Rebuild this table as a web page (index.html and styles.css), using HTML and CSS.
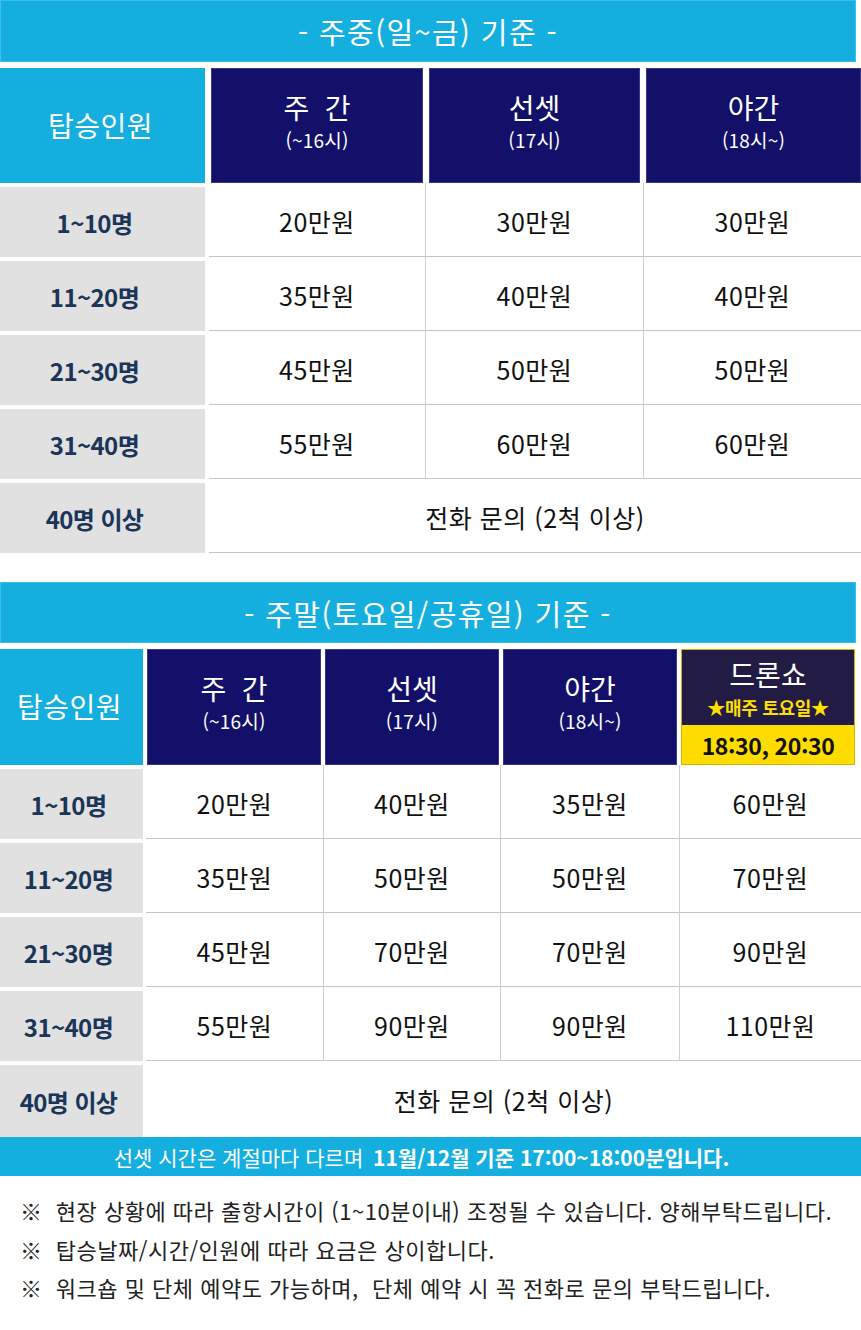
FILE: index.html
```html
<!DOCTYPE html>
<html lang="ko">
<head>
<meta charset="utf-8">
<title>요금표</title>
<link rel="stylesheet" href="styles.css">
</head>
<body>
<section class="block wk">
  <div class="banner">- 주중(일~금) 기준 -</div>
  <div class="head">
    <div class="hcell label-head">탑승인원</div>
    <div class="hcell time"><span class="t">주&nbsp;&nbsp;간</span><span class="s">(~16시)</span></div>
    <div class="hcell time"><span class="t">선셋</span><span class="s">(17시)</span></div>
    <div class="hcell time"><span class="t">야간</span><span class="s">(18시~)</span></div>
  </div>
  <div class="row"><div class="lab">1~10명</div><div class="val">20만원</div><div class="val">30만원</div><div class="val">30만원</div></div>
  <div class="row"><div class="lab">11~20명</div><div class="val">35만원</div><div class="val">40만원</div><div class="val">40만원</div></div>
  <div class="row"><div class="lab">21~30명</div><div class="val">45만원</div><div class="val">50만원</div><div class="val">50만원</div></div>
  <div class="row"><div class="lab">31~40명</div><div class="val">55만원</div><div class="val">60만원</div><div class="val">60만원</div></div>
  <div class="row"><div class="lab">40명 이상</div><div class="val span">전화 문의 (2척 이상)</div></div>
</section>

<section class="block we">
  <div class="banner">- 주말(토요일/공휴일) 기준 -</div>
  <div class="head">
    <div class="hcell label-head">탑승인원</div>
    <div class="hcell time"><span class="t">주&nbsp;&nbsp;간</span><span class="s">(~16시)</span></div>
    <div class="hcell time"><span class="t">선셋</span><span class="s">(17시)</span></div>
    <div class="hcell time"><span class="t">야간</span><span class="s">(18시~)</span></div>
    <div class="hcell drone">
      <div class="drone-top"><span class="t">드론쇼</span><span class="star">★매주 토요일★</span></div>
      <div class="drone-time">18:30, 20:30</div>
    </div>
  </div>
  <div class="row"><div class="lab">1~10명</div><div class="val">20만원</div><div class="val">40만원</div><div class="val">35만원</div><div class="val">60만원</div></div>
  <div class="row"><div class="lab">11~20명</div><div class="val">35만원</div><div class="val">50만원</div><div class="val">50만원</div><div class="val">70만원</div></div>
  <div class="row"><div class="lab">21~30명</div><div class="val">45만원</div><div class="val">70만원</div><div class="val">70만원</div><div class="val">90만원</div></div>
  <div class="row"><div class="lab">31~40명</div><div class="val">55만원</div><div class="val">90만원</div><div class="val">90만원</div><div class="val">110만원</div></div>
  <div class="row last"><div class="lab">40명 이상</div><div class="val span">전화 문의 (2척 이상)</div></div>
</section>

<div class="notebar">선셋 시간은 계절마다 다르며&nbsp; <b>11월/12월 기준 17:00~18:00분입니다.</b></div>

<ul class="notes">
  <li>※&nbsp; 현장 상황에 따라 출항시간이 (1~10분이내) 조정될 수 있습니다. 양해부탁드립니다.</li>
  <li>※&nbsp; 탑승날짜/시간/인원에 따라 요금은 상이합니다.</li>
  <li>※&nbsp; 워크숍 및 단체 예약도 가능하며,&nbsp; 단체 예약 시 꼭 전화로 문의 부탁드립니다.</li>
</ul>
</body>
</html>
```

FILE: styles.css
```css
* { box-sizing: border-box; }
body {
  margin: 0;
  width: 861px;
  background: #fff;
  font-family: "Noto Sans CJK KR", "Noto Sans", sans-serif;
  color: #111;
}

.banner {
  width: 856px;
  background: #14afdf;
  border: 1px solid #3cc0e8;
  color: #fff;
  font-size: 29px;
  letter-spacing: 1.4px;
  text-align: center;
  display: flex;
  align-items: center;
  justify-content: center;
}
.wk .banner { height: 62px; }
.we { margin-top: 29px; }
.we .banner { height: 61px; padding-top: 1px; }

.head {
  display: grid;
  margin-top: 6px;
}
.wk .head {
  grid-template-columns: 205px 212px 211px 1fr;
  column-gap: 6px;
  height: 115px;
}
.we .head {
  grid-template-columns: 143px 174px 174px 174px 174px;
  column-gap: 4px;
  height: 116px;
}

.hcell {
  color: #fff;
  display: flex;
  flex-direction: column;
  align-items: center;
  justify-content: center;
}
.label-head {
  background: #14afdf;
  font-size: 28px;
  letter-spacing: 0.5px;
  padding-bottom: 2px;
  padding-right: 4px;
}
.time {
  background: #13106a;
  border: 1px solid #3a3786;
  padding-bottom: 12px;
}
.t {
  font-size: 28px;
  line-height: 40px;
}
.s {
  font-size: 19px;
  line-height: 26px;
  letter-spacing: 0.2px;
}

.drone {
  background: #ffdc00;
  border: 1px solid #cfb400;
}
.drone-top {
  background: #221c45;
  width: 100%;
  height: 75px;
  display: flex;
  flex-direction: column;
  align-items: center;
  justify-content: center;
  padding-bottom: 1px;
}
.drone-top .t { line-height: 40px; }
.star {
  color: #ffdf00;
  font-size: 18px;
  font-weight: 700;
  line-height: 26px;
  letter-spacing: -0.3px;
}
.drone-time {
  flex: 1;
  width: 100%;
  display: flex;
  align-items: center;
  justify-content: center;
  color: #111;
  font-size: 23px;
  font-weight: 700;
  letter-spacing: -0.4px;
}

.row {
  display: grid;
  height: 74px;
}
.wk .row { grid-template-columns: 209px 216px 218px 1fr; }
.we .row { grid-template-columns: 146px 177px 177px 179px 1fr; }

.lab {
  background: #e1e1e1;
  margin-top: 4px;
  margin-right: 4px;
  padding-right: 16px;
  display: flex;
  align-items: center;
  justify-content: center;
  color: #1b3559;
  font-size: 24px;
  font-weight: 700;
  letter-spacing: -0.6px;
}
.we .lab { margin-right: 3px; padding-right: 6px; }
.val {
  display: flex;
  align-items: center;
  justify-content: center;
  padding-top: 2px;
  border-bottom: 1px solid #c6c6c6;
  font-size: 25px;
  letter-spacing: 0.5px;
  color: #111;
}
.val + .val { border-left: 1px solid #d0d0d0; }
.val.span { grid-column: 2 / -1; }
.we .row.last .val { border-bottom: none; }
.we .row.last { height: 76px; }

.notebar {
  background: #14afdf;
  color: #fff;
  height: 39px;
  display: flex;
  align-items: center;
  justify-content: center;
  padding-right: 18px;
  font-size: 21px;
  letter-spacing: 0;
}
.notebar b { font-weight: 700; margin-left: 4px; }

.notes {
  list-style: none;
  margin: 15px 0 0;
  padding: 0 0 0 20px;
  font-size: 22px;
  line-height: 38.5px;
  letter-spacing: 0.5px;
  color: #222;
  white-space: nowrap;
}
```
